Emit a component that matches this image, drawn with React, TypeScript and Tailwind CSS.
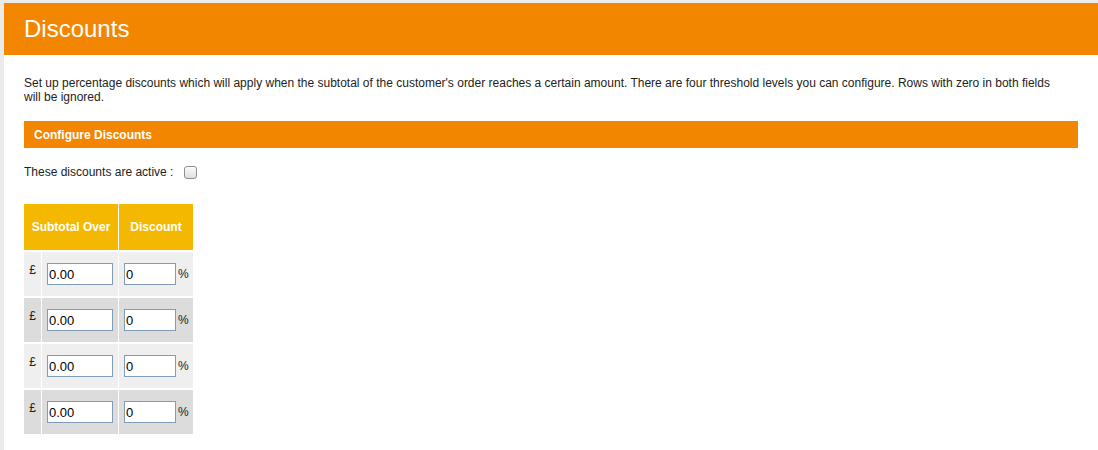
import React from 'react';

const rows = [
  { amount: '0.00', discount: '0', bg: 'bg-[#efefef]' },
  { amount: '0.00', discount: '0', bg: 'bg-[#dcdcdc]' },
  { amount: '0.00', discount: '0', bg: 'bg-[#efefef]' },
  { amount: '0.00', discount: '0', bg: 'bg-[#dcdcdc]' },
];

const App: React.FC = () => {
  return (
    <div className="min-h-screen bg-[#ebebeb] pl-1 pt-[3px] font-['Liberation_Sans',Arial,sans-serif] text-[#222]">
      <div className="min-h-[447px] bg-white">
        <div className="flex h-[52px] items-center bg-[#f38600] px-5 text-[24px] text-white">Discounts</div>

        <div className="px-5">
          <p className="mt-[21px] pr-[14px] text-[12px] leading-[14px]">
            Set up percentage discounts which will apply when the subtotal of the customer's order reaches a certain
            amount. There are four threshold levels you can configure. Rows with zero in both fields will be ignored.
          </p>

          <div className="mt-[17px] flex h-[27px] items-center bg-[#f38600] pl-[10px] text-[12px] font-bold text-white">
            Configure Discounts
          </div>

          <label className="mt-[14px] flex h-5 items-center text-[12px]">
            These discounts are active :
            <input
              type="checkbox"
              className="ml-[11px] h-[13px] w-[13px] appearance-none rounded-[3px] border border-[#8f8f8f] bg-gradient-to-b from-[#fcfcfc] to-[#dedede]"
            />
          </label>

          <div className="mt-[22px] grid w-[169px] grid-cols-[17px_76px_74px] gap-x-px gap-y-[2px] text-[12px]">
            <div className="col-span-2 flex h-[46px] items-center justify-center bg-[#f5b800] font-bold text-white">
              Subtotal Over
            </div>
            <div className="flex h-[46px] items-center justify-center bg-[#f5b800] font-bold text-white">Discount</div>

            {rows.map((r, i) => (
              <React.Fragment key={i}>
                <div className={`${r.bg} h-[44px] pt-[9px] text-center`}>£</div>
                <div className={`${r.bg} flex h-[44px] items-center pl-[5px]`}>
                  <input
                    type="text"
                    defaultValue={r.amount}
                    className="h-[22px] w-[66px] border border-[#7f9db9] bg-white px-[1px] text-[13px] text-black outline-none"
                  />
                </div>
                <div className={`${r.bg} flex h-[44px] items-center pl-[5px]`}>
                  <input
                    type="text"
                    defaultValue={r.discount}
                    className="h-[22px] w-[52px] border border-[#7f9db9] bg-white px-[1px] text-[13px] text-black outline-none"
                  />
                  <span className="ml-[2px]">%</span>
                </div>
              </React.Fragment>
            ))}
          </div>
        </div>
      </div>
    </div>
  );
};

export default App;
